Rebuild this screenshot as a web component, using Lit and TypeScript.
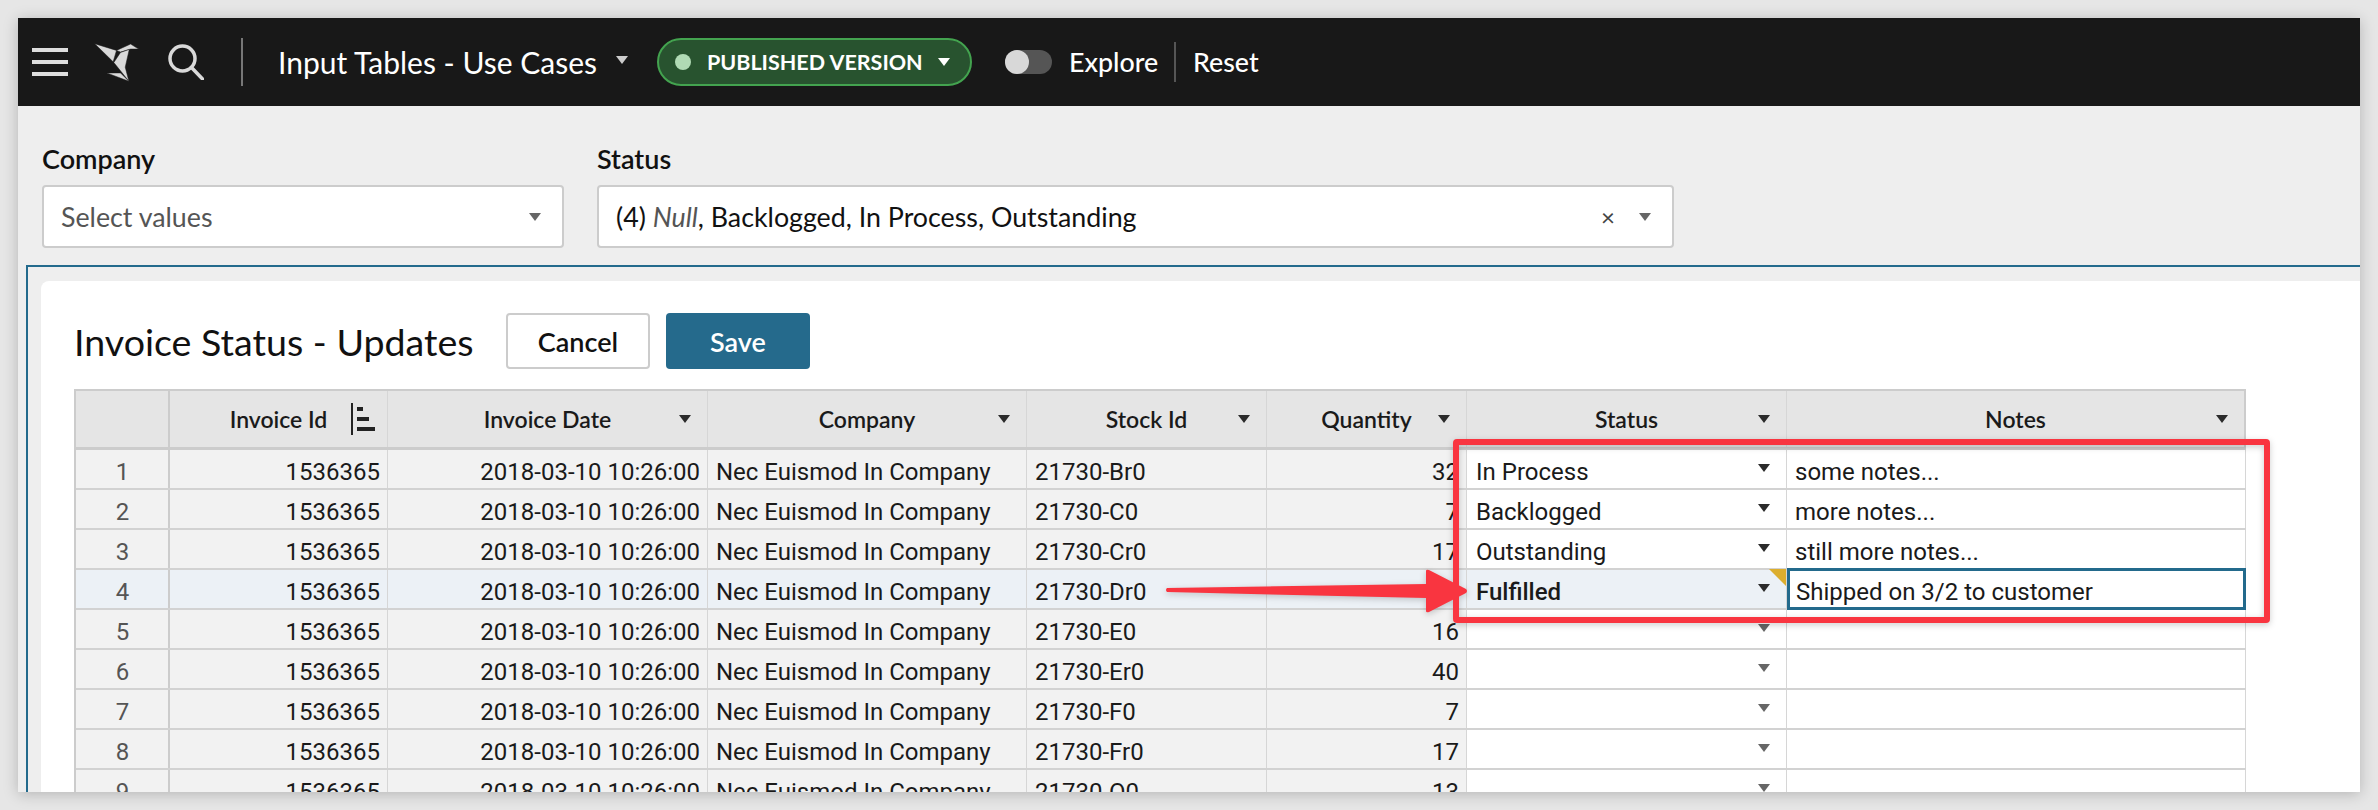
import { LitElement, html, css, svg } from 'lit';
import { customElement } from 'lit/decorators.js';

const STOCK = [
  ['21730-Br0', '32', 'In Process', 'some notes...'],
  ['21730-C0', '7', 'Backlogged', 'more notes...'],
  ['21730-Cr0', '17', 'Outstanding', 'still more notes...'],
  ['21730-Dr0', '7', 'Fulfilled', 'Shipped on 3/2 to customer'],
  ['21730-E0', '16', '', ''],
  ['21730-Er0', '40', '', ''],
  ['21730-F0', '7', '', ''],
  ['21730-Fr0', '17', '', ''],
  ['21730-O0', '13', '', ''],
];

const HEADERS = ['Invoice Date', 'Company', 'Stock Id', 'Quantity', 'Status', 'Notes'];

@customElement('app-root')
class AppRoot extends LitElement {
  private caret(cls = '') {
    return html`<span class="caret ${cls}"></span>`;
  }

  private logo() {
    return html`<svg class="logo" viewBox="280 125 140 122" width="47" height="41">
      <g fill="#d9d9d9" stroke="#181818" stroke-width="1.5">
        ${svg`<polygon points="285,130 350,150 340,184" />
        <polygon points="350,150 392,131 416,146 392,146 362,155" />
        <polygon points="342,186 362,156 388,147 376,200 387,242" />
        <polygon points="321,217 362,217 387,242" />`}
      </g>
    </svg>`;
  }

  render() {
    return html`
      <div class="page">
        <div class="window">
          <div class="nav">
            <div class="burger"><i></i><i></i><i></i></div>
            ${this.logo()}
            <svg class="search" viewBox="0 0 36 36" width="36" height="36" fill="none" stroke="#d9d9d9" stroke-width="3.5">
              <circle cx="14.5" cy="14.5" r="12.5" />
              <path d="M23.5 23.5 L34.5 35" stroke-linecap="round" />
            </svg>
            <span class="nav-rule"></span>
            <span class="doc-title">Input Tables - Use Cases</span>
            ${this.caret('light doc-caret')}
            <span class="pill">
              <span class="dot"></span>
              <span class="pill-text">PUBLISHED VERSION</span>
              ${this.caret('white')}
            </span>
            <span class="toggle"><span class="knob"></span></span>
            <span class="nav-link explore">Explore</span>
            <span class="nav-rule short"></span>
            <span class="nav-link">Reset</span>
          </div>

          <div class="filters">
            <div class="filter company">
              <div class="filter-label">Company</div>
              <div class="select">
                <span class="placeholder">Select values</span>
                ${this.caret('grey')}
              </div>
            </div>
            <div class="filter status">
              <div class="filter-label">Status</div>
              <div class="select">
                <span class="value">(4) <em>Null</em>, Backlogged, In Process, Outstanding</span>
                <span class="clear">×</span>
                ${this.caret('grey')}
              </div>
            </div>
          </div>

          <div class="canvas">
            <div class="card">
              <div class="title-row">
                <span class="card-title">Invoice Status - Updates</span>
                <span class="btn cancel">Cancel</span>
                <span class="btn save">Save</span>
              </div>
              <div class="table">
                <div class="row head">
                  <div class="hcell"></div>
                  <div class="hcell">
                    <span></span><span>Invoice Id</span>
                    <svg class="sort" viewBox="0 0 24 32" width="24" height="32" fill="#222">
                      <rect x="0" y="0" width="2" height="32" /><rect x="6" y="4" width="6" height="4" />
                      <rect x="6" y="14" width="12" height="4" /><rect x="6" y="24" width="18" height="4" />
                    </svg>
                  </div>
                  ${HEADERS.map(h => html`<div class="hcell"><span></span><span>${h}</span>${this.caret('dark')}</div>`)}
                </div>
                ${STOCK.map((r, i) => html`
                  <div class="row ${i === 3 ? 'active' : ''}">
                    <div class="cell num">${i + 1}</div>
                    <div class="cell right">1536365</div>
                    <div class="cell right">2018-03-10 10:26:00</div>
                    <div class="cell">Nec Euismod In Company</div>
                    <div class="cell">${r[0]}</div>
                    <div class="cell right">${r[1]}</div>
                    <div class="cell edit pick">
                      <span class="${i === 3 ? 'changed' : ''}">${r[2]}</span>
                      ${this.caret(r[2] ? 'dark' : 'grey')}
                      ${i === 3 ? html`<span class="flag"></span>` : ''}
                    </div>
                    <div class="cell edit ${i === 3 ? 'focused' : ''}">${r[3]}</div>
                  </div>
                `)}
              </div>
            </div>
          </div>
        </div>

        <svg class="markup" viewBox="0 0 2378 810" width="2378" height="810">
          <rect x="1456" y="442" width="811" height="178" fill="none" stroke="#f93540" stroke-width="6" rx="1" />
          <path d="M1167 588 L1426 584 L1426 571 Q1426 569 1429 570 L1466 589 Q1468 591 1466 593 L1429 612 Q1426 613 1426 611 L1426 598 L1167 592 Q1165 590 1167 588 Z" fill="#f93540" />
        </svg>
      </div>
    `;
  }

  static styles = css`
    :host {
      display: block;
      font-family: Lato, 'Open Sans', sans-serif;
      color: #111;
    }

    .page {
      position: relative;
      width: 2378px;
      height: 810px;
      padding: 18px;
      box-sizing: border-box;
      background: #e6e6e6;
      overflow: hidden;
    }

    .window {
      display: flex;
      flex-direction: column;
      height: 774px;
      background: #eee;
      overflow: hidden;
      box-shadow: 0 2px 14px rgba(0, 0, 0, 0.22);
    }

    .caret {
      display: inline-block;
      width: 0;
      height: 0;
      border-left: 6px solid transparent;
      border-right: 6px solid transparent;
      border-top: 8px solid #333;
      flex: none;
    }
    .caret.light { border-top-color: #ccc; }
    .caret.white { border-top-color: #fff; }
    .caret.grey { border-top-color: #666; }
    .caret.dark { border-top-color: #2b2b2b; }

    .nav {
      display: flex;
      align-items: center;
      height: 88px;
      flex: none;
      padding-left: 14px;
      background: #181818;
      color: #fff;
    }

    .burger {
      display: flex;
      flex-direction: column;
      gap: 8px;
      width: 36px;
    }
    .burger i {
      display: block;
      height: 4px;
      background: #ddd;
    }

    .logo { margin-left: 25px; flex: none; }
    .search { margin-left: 28px; flex: none; }

    .nav-rule {
      width: 2px;
      height: 48px;
      margin-left: 37px;
      background: #777;
      flex: none;
    }
    .nav-rule.short {
      height: 40px;
      margin: 0 17px;
      background: #555;
    }

    .doc-title {
      width: 320px;
      margin-left: 35px;
      font-size: 30px;
      white-space: nowrap;
    }
    .doc-caret { margin-left: 18px; margin-top: -4px; }

    .pill {
      display: flex;
      align-items: center;
      width: 315px;
      height: 48px;
      flex: none;
      box-sizing: border-box;
      margin-left: 29px;
      padding: 0 20px 0 16px;
      background: #28532f;
      border: 2px solid #43a34f;
      border-radius: 24px;
    }
    .dot {
      width: 16px;
      height: 16px;
      border-radius: 50%;
      background: #b0dab4;
    }
    .pill-text {
      flex: 1;
      margin-left: 16px;
      font-size: 21.5px;
      font-weight: 700;
      white-space: nowrap;
    }

    .toggle {
      display: block;
      width: 47px;
      height: 24px;
      margin-left: 33px;
      background: #555;
      border-radius: 12px;
      flex: none;
    }
    .knob {
      display: block;
      width: 24px;
      height: 24px;
      border-radius: 50%;
      background: #d8d8d8;
    }

    .nav-link {
      font-size: 26.8px;
      font-weight: 500;
      white-space: nowrap;
    }
    .nav-link.explore {
      width: 88px;
      margin-left: 17px;
    }

    .filters {
      display: flex;
      gap: 33px;
      height: 159px;
      flex: none;
      padding-left: 24px;
      box-sizing: border-box;
    }
    .filter.company { width: 522px; }
    .filter.status { width: 1077px; }
    .filter-label {
      height: 79px;
      padding-top: 36px;
      box-sizing: border-box;
      font-size: 27px;
      font-weight: 600;
      line-height: 34px;
    }
    .select {
      display: flex;
      align-items: center;
      height: 63px;
      box-sizing: border-box;
      padding: 0 21px 0 17px;
      background: #fff;
      border: 2px solid #ccc;
      border-radius: 4px;
      font-size: 26.8px;
    }
    .placeholder { flex: 1; color: #555; }
    .value { flex: 1; }
    .value em { color: #555; }
    .clear { margin-right: 24px; color: #444; font-size: 24px; }

    .canvas {
      flex: 1;
      min-height: 0;
      display: flex;
      margin-left: 8px;
      padding: 14px 0 0 13px;
      border-top: 2px solid #236a8c;
      border-left: 2px solid #236a8c;
    }

    .card {
      flex: 1;
      background: #fff;
      border-radius: 8px 0 0 0;
      padding: 32px 0 0 33px;
      overflow: hidden;
    }

    .title-row {
      display: flex;
      align-items: center;
      height: 56px;
      margin-bottom: 20px;
    }
    .card-title {
      width: 432px;
      font-size: 37.6px;
      white-space: nowrap;
    }
    .btn {
      display: flex;
      align-items: center;
      justify-content: center;
      height: 56px;
      box-sizing: border-box;
      border-radius: 4px;
      font-size: 27px;
      font-weight: 600;
    }
    .cancel {
      width: 144px;
      border: 2px solid #ccc;
    }
    .save {
      width: 144px;
      margin-left: 16px;
      background: #256a8c;
      color: #fff;
    }

    .table {
      width: 2172px;
      border-left: 2px solid #ccc;
      box-sizing: border-box;
    }
    .row {
      display: grid;
      grid-template-columns: 94px 218px 320px 319px 240px 200px 320px 459px;
      height: 40px;
      border-bottom: 2px solid #d2d2d2;
      box-sizing: border-box;
      background: #f2f2f2;
      font-family: Roboto, sans-serif;
      font-size: 24px;
      color: #1a1a1a;
    }
    .row.head {
      height: 61px;
      border-top: 2px solid #ccc;
      border-bottom: 3px solid #ccc;
      background: #e5e5e5;
      font-family: Lato, 'Open Sans', sans-serif;
      font-size: 23px;
      font-weight: 600;
    }

    .hcell {
      display: grid;
      grid-template-columns: 1fr auto 1fr;
      align-items: center;
      padding: 0 16px;
      border-right: 1px solid #d6d6d6;
    }
    .hcell:first-child { border-right: 2px solid #ccc; }
    .hcell:last-child { border-right: 2px solid #ccc; }
    .hcell .caret { justify-self: end; }
    .hcell .sort { justify-self: end; margin-right: -4px; }

    .cell {
      position: relative;
      display: flex;
      align-items: center;
      padding: 6px 7px 0 8px;
      min-width: 0;
      white-space: nowrap;
      border-right: 1px solid #d6d6d6;
    }
    .cell.right { justify-content: flex-end; }
    .cell.num {
      justify-content: center;
      color: #555;
      border-right: 2px solid #ccc;
    }

    .row.active { background: #ecf1f6; }
    .cell.edit { background: #fff; }
    .row.active .cell.edit { background: #ecf1f6; }
    .cell.pick { padding-left: 9px; }
    .cell.pick span:first-child { flex: 1; }
    .cell.pick .caret { margin: -8px 9px 0 0; }
    .changed { font-weight: 500; }

    .flag {
      position: absolute;
      top: -1px;
      right: 0;
      width: 0;
      height: 0;
      border-top: 17px solid #dcae2e;
      border-left: 17px solid transparent;
    }

    .row.active .cell.focused {
      margin: -2px 0 -2px;
      padding-left: 6px;
      background: #fff;
      border: 3px solid #236a8c;
    }

    .markup {
      position: absolute;
      left: 0;
      top: 0;
      filter: drop-shadow(0 2px 3px rgba(0, 0, 0, 0.2));
    }
  `;
}

declare global {
  interface HTMLElementTagNameMap {
    'app-root': AppRoot;
  }
}
